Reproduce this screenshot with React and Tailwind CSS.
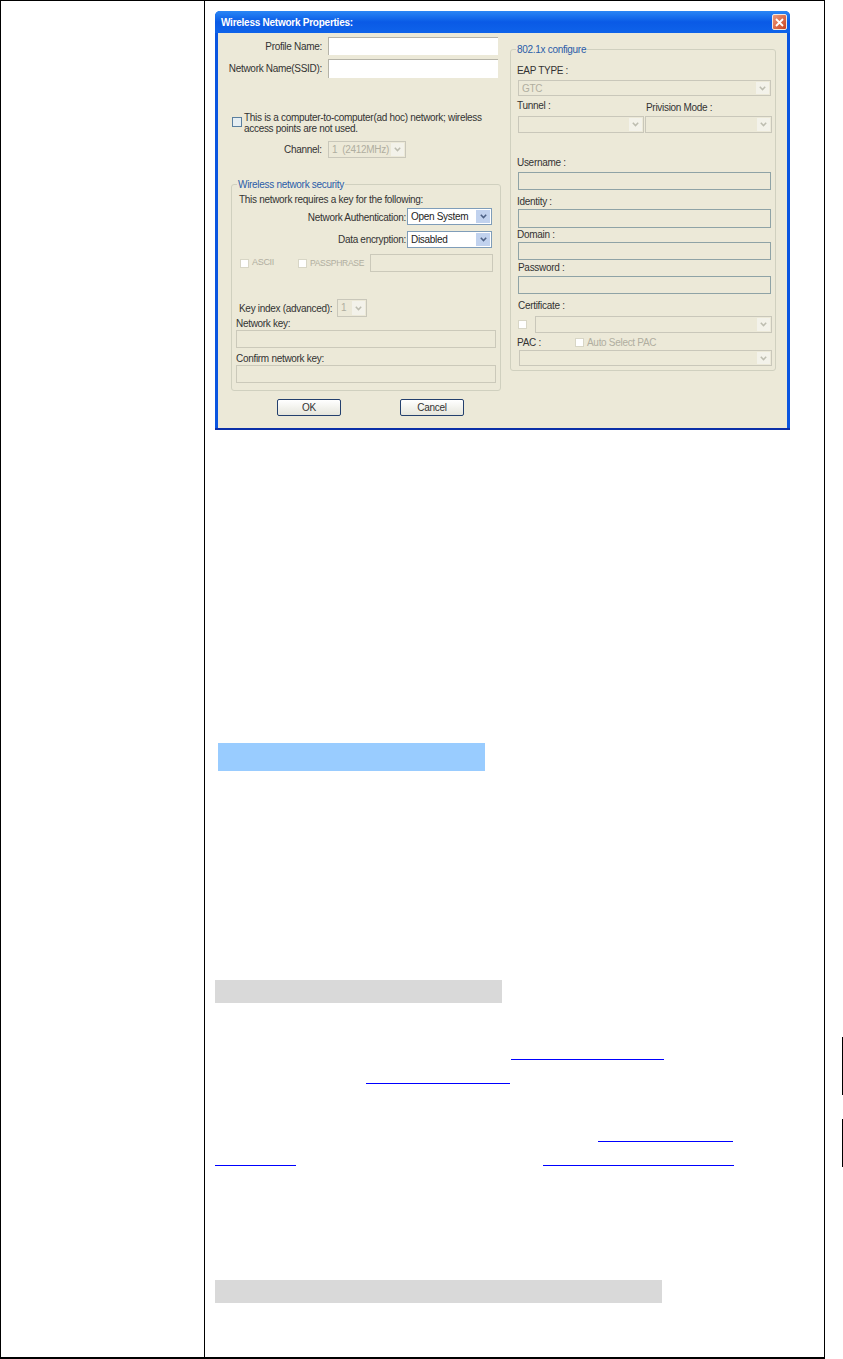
const font = { fontFamily: '"Liberation Sans", Arial, sans-serif' };

function Chevron({ color }) {
  return (
    <svg width="7" height="5" viewBox="0 0 7 5" fill="none">
      <path d="M0.8 0.8 L3.5 3.6 L6.2 0.8" stroke={color} strokeWidth="1.5" />
    </svg>
  );
}

function Select({ className, value, enabled }) {
  if (enabled) {
    return (
      <div className={`flex border border-[#7f9db9] bg-white p-px ${className}`}>
        <span className="flex-1 pl-0.5 text-[10px] leading-[14px] whitespace-nowrap text-[#222]">{value}</span>
        <span className="flex w-[14px] items-center justify-center bg-[#c1d2ee]">
          <Chevron color="#4d6185" />
        </span>
      </div>
    );
  }
  return (
    <div className={`flex border border-[#c9c7ba] bg-[#ece9d8] p-px ${className}`}>
      <span className="flex-1 pl-0.5 text-[10px] leading-[13px] whitespace-pre text-[#b0aea0]">{value}</span>
      <span className="flex w-[13px] items-center justify-center bg-[#f3f2ea]">
        <Chevron color="#bdbdb0" />
      </span>
    </div>
  );
}

function Check({ className }) {
  return <span className={`block h-[9px] w-[9px] shrink-0 border border-[#d8d6c6] bg-white ${className || ''}`} />;
}

function Label({ className, children }) {
  return <div className={`h-[12px] text-[10px] leading-[14px] whitespace-nowrap text-[#333] ${className || ''}`}>{children}</div>;
}

function DisabledInput({ className }) {
  return <div className={`border border-[#cbc9ba] bg-[#ece9d8] ${className}`} />;
}

function ConfigInput({ className }) {
  return <div className={`ml-[7px] w-[253px] border border-[#8fa3a6] bg-[#ece9d8] ${className}`} />;
}

function XpButton({ children, className }) {
  return (
    <div className={`flex h-[17px] w-[64px] items-center justify-center rounded-[2px] border border-[#24406e] bg-gradient-to-b from-white to-[#e6e6dc] text-[10px] text-[#333] ${className || ''}`}>
      {children}
    </div>
  );
}

function Dialog() {
  return (
    <div className="ml-[10px] mt-[10px] flex h-[419px] w-[575px] flex-col overflow-hidden rounded-t-[5px] border-b-2 border-[#0b2fa8] bg-[#0a55e0]">
      <div className="flex h-[22px] shrink-0 items-center justify-between bg-gradient-to-b from-[#2a86f5] via-[#0a5ae6] to-[#0f63ea] pl-[6px] pr-[3px]">
        <span className="text-[10px] font-bold tracking-[-0.25px] text-white">Wireless Network Properties:</span>
        <span className="flex h-[16px] w-[15px] items-center justify-center rounded-[2px] border border-[#f0e8e0] bg-gradient-to-br from-[#ec9a7c] to-[#c8401c]">
          <svg width="9" height="9" viewBox="0 0 9 9">
            <path d="M1 1 L8 8 M8 1 L1 8" stroke="#fff" strokeWidth="1.8" />
          </svg>
        </span>
      </div>

      <div className="mx-[3px] flex flex-1 bg-[#ece9d8]">
        {/* left side */}
        <div className="flex w-[287px] flex-col">
          <div className="mt-[4px] flex h-[18px]">
            <div className="w-[104px] pt-[3px] text-right text-[10px] leading-[14px] text-[#333]">Profile Name:</div>
            <div className="ml-[6px] w-[170px] border-l border-t border-[#b5b3a8] bg-white" />
          </div>
          <div className="mt-[4px] flex h-[19px]">
            <div className="w-[104px] pt-[3px] text-right text-[10px] leading-[14px] whitespace-nowrap text-[#333]">Network Name(SSID):</div>
            <div className="ml-[6px] w-[170px] border-l border-t border-[#b5b3a8] bg-white" />
          </div>

          <div className="ml-[14px] mt-[34px] flex h-[22px]">
            <span className="mt-[5px] block h-[10px] w-[10px] shrink-0 border border-[#5a7f9f] bg-[#e6eef2]" />
            <div className="ml-[2px] w-[250px] text-[10px] leading-[11px] text-[#333]">
              This is a computer-to-computer(ad hoc) network; wireless
              <br />
              access points are not used.
            </div>
          </div>

          <div className="mt-[7px] flex h-[17px] pl-[66px]">
            <div className="w-[34px] pt-[2px] text-[10px] leading-[14px] text-[#333]">Channel:</div>
            <Select className="ml-[10px] w-[78px]" value="1  (2412MHz)" />
          </div>

          <div className="relative ml-[13px] mt-[26px] flex h-[207px] w-[270px] flex-col rounded-[3px] border border-[#d0d0bf]">
            <span className="absolute -top-[7px] left-[5px] bg-[#ece9d8] px-px text-[10px] leading-[14px] text-[#2a5ca8]">Wireless network security</span>
            <Label className="ml-[7px] mt-[8px]">This network requires a key for the following:</Label>
            <div className="mt-[3px] flex h-[17px] justify-end pr-[8px]">
              <div className="mr-px pt-[3px] text-[10px] leading-[14px] text-[#333]">Network Authentication:</div>
              <Select enabled className="w-[85px]" value="Open System" />
            </div>
            <div className="mt-[6px] flex h-[17px] justify-end pr-[8px]">
              <div className="mr-px pt-[2px] text-[10px] leading-[14px] text-[#333]">Data encryption:</div>
              <Select enabled className="w-[85px]" value="Disabled" />
            </div>
            <div className="mt-[6px] flex h-[18px] pl-[8px]">
              <div className="flex w-[58px] items-center">
                <Check />
                <span className="ml-[3px] text-[9px] text-[#b0aea0]">ASCII</span>
              </div>
              <div className="flex w-[72px] items-center">
                <Check />
                <span className="ml-[3px] text-[8.5px] text-[#b0aea0]">PASSPHRASE</span>
              </div>
              <DisabledInput className="w-[123px]" />
            </div>
            <div className="mt-[27px] flex h-[18px] pl-[7px]">
              <div className="w-[98px] pt-[3px] text-[10px] leading-[14px] whitespace-nowrap text-[#333]">Key index (advanced):</div>
              <Select className="w-[30px]" value="1" />
            </div>
            <Label className="ml-[4px]">Network key:</Label>
            <DisabledInput className="ml-[4px] mt-px h-[18px] w-[260px]" />
            <Label className="ml-[4px] mt-[4px]">Confirm network key:</Label>
            <DisabledInput className="ml-[4px] mt-px h-[18px] w-[260px]" />
          </div>

          <div className="ml-[59px] mt-[8px] flex gap-[59px]">
            <XpButton>OK</XpButton>
            <XpButton>Cancel</XpButton>
          </div>
        </div>

        {/* right side */}
        <div className="relative ml-[5px] mt-[16px] flex h-[322px] w-[266px] flex-col rounded-[3px] border border-[#d0d0bf]">
          <span className="absolute -top-[7px] left-[5px] bg-[#ece9d8] px-px text-[10px] leading-[14px] text-[#2a5ca8]">802.1x configure</span>
          <Label className="ml-[6px] mt-[14px]">EAP TYPE :</Label>
          <Select className="ml-[7px] mt-[4px] h-[16px] w-[253px]" value="GTC" />
          <div className="mt-[3px] flex h-[14px] pl-[6px]">
            <Label className="w-[129px]">Tunnel :</Label>
            <Label className="mt-[2px]">Privision Mode :</Label>
          </div>
          <div className="ml-[7px] mt-[3px] flex h-[17px] gap-px">
            <Select className="w-[126px]" />
            <Select className="w-[127px]" />
          </div>
          <Label className="ml-[6px] mt-[23px]">Username :</Label>
          <ConfigInput className="mt-[4px] h-[18px]" />
          <Label className="ml-[6px] mt-[5px]">Identity :</Label>
          <ConfigInput className="mt-[2px] h-[19px]" />
          <Label className="ml-[6px]">Domain :</Label>
          <ConfigInput className="mt-[2px] h-[18px]" />
          <Label className="ml-[7px] mt-px">Password :</Label>
          <ConfigInput className="mt-[3px] h-[18px]" />
          <Label className="ml-[7px] mt-[5px]">Certificate :</Label>
          <div className="ml-[7px] mt-[5px] flex h-[17px] items-center">
            <Check />
            <Select className="ml-[8px] h-[17px] w-[237px]" />
          </div>
          <div className="mt-[2px] flex h-[14px] items-center pl-[6px]">
            <Label className="w-[58px]">PAC :</Label>
            <Check />
            <span className="ml-[3px] text-[10px] text-[#b0aea0]">Auto Select PAC</span>
          </div>
          <Select className="ml-[8px] mt-px h-[16px] w-[253px]" />
        </div>
      </div>
    </div>
  );
}

export default function App() {
  return (
    <div className="flex h-[1359px] w-[843px] bg-white tracking-[-0.3px]" style={font}>
      <div className="flex h-full w-[825px] border-b-2 border-l border-r border-t border-black">
        <div className="w-[204px] border-r border-black" />
        <div className="flex flex-1 flex-col">
          <Dialog />
          <div className="ml-[13px] mt-[313px] h-[28px] w-[267px] bg-[#99ccff]" />
          <div className="ml-[10px] mt-[209px] h-[23px] w-[287px] bg-[#d9d9d9]" />
          <div className="ml-[306px] mt-[56px] h-px w-[153px] bg-[#0000ff]" />
          <div className="ml-[161px] mt-[23px] h-px w-[144px] bg-[#0000ff]" />
          <div className="ml-[393px] mt-[57px] h-px w-[135px] bg-[#0000ff]" />
          <div className="mt-[23px] flex">
            <div className="ml-[10px] h-px w-[81px] bg-[#0000ff]" />
            <div className="ml-[247px] h-px w-[191px] bg-[#0000ff]" />
          </div>
          <div className="ml-[10px] mt-[114px] h-[23px] w-[447px] bg-[#d9d9d9]" />
        </div>
      </div>
      <div className="flex flex-1 flex-col items-end">
        <div className="mt-[1037px] h-[58px] w-px bg-black" />
        <div className="mt-[24px] h-[48px] w-px bg-black" />
      </div>
    </div>
  );
}
